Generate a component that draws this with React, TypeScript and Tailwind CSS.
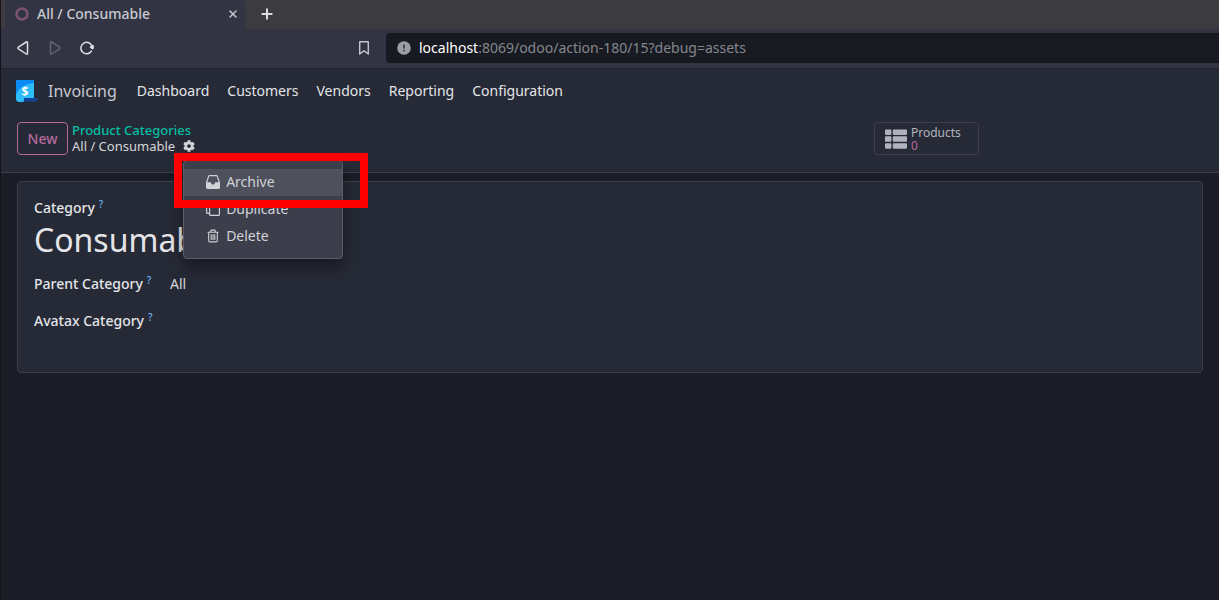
import { useState } from "react";
import { FaCog, FaThList } from "react-icons/fa";
import { Plus, X } from "lucide-react";

const NAV_ITEMS = ["Dashboard", "Customers", "Vendors", "Reporting", "Configuration"];

function OdooRing() {
  return (
    <svg viewBox="0 0 14 14" className="w-3.5 h-3.5 flex-shrink-0" fill="none">
      <circle cx="7" cy="7" r="5.4" stroke="#7b5272" strokeWidth="2.8" />
    </svg>
  );
}

function InvoicingLogo() {
  return (
    <svg viewBox="0 0 22 22" className="w-[22px] h-[22px] flex-shrink-0">
      <path d="M0 0h18v18H8v4H4a4 4 0 0 1-4-4z" fill="#2ebcfa" />
      <path d="M0 0h18v3C9 4 2 8 0 15z" fill="#0d8bf5" />
      <path d="M8 18h14c-.5 2.6-2 3.6-4 3.6H7.2c.6-.8.8-2 .8-3.6z" fill="#144496" />
      <circle cx="4" cy="18" r="4" fill="#2ebcfa" />
      <text
        x="9"
        y="15.5"
        textAnchor="middle"
        fontFamily="Noto Sans, sans-serif"
        fontSize="12"
        fontWeight="700"
        fill="#ffffff"
      >
        $
      </text>
    </svg>
  );
}

function Triangle({ forward = false }: { forward?: boolean }) {
  return (
    <svg viewBox="0 0 14 16" className="w-3.5 h-4" fill="none" strokeWidth="1.5" strokeLinejoin="round">
      {forward ? (
        <path d="M2.5 2.6v10.8c0 .8.6 1 1.2.6l7.9-5.1c.6-.5.6-1.3 0-1.8L3.7 2c-.6-.4-1.2-.2-1.2.6z" stroke="#62646f" />
      ) : (
        <path d="M11.5 2.6v10.8c0 .8-.6 1-1.200.6L2.400 8.900c-.6-.5-.6-1.300 0-1.800L10.300 2c.6-.4 1.200-.2 1.200.6z" stroke="#dfe0e4" />
      )}
    </svg>
  );
}

function ReloadIcon() {
  return (
    <svg viewBox="0 0 14 14" className="w-3.5 h-3.5" fill="none">
      <path d="M11.4 10.1A5.700 5.700 0 1 1 12.100 5.500" stroke="#dfe0e4" strokeWidth="1.500" strokeLinecap="round" />
      <path d="M9.900 6.100l3.300-2 .6 3.300-1.700.6z" fill="#dfe0e4" stroke="#dfe0e4" strokeWidth="0.800" strokeLinejoin="round" />
    </svg>
  );
}

function BookmarkIcon() {
  return (
    <svg viewBox="0 0 10 14" className="w-2.5 h-3.5" fill="none">
      <path d="M.7.7h8.600v12.300L5 9.700.7 13z" stroke="#c6c7cc" strokeWidth="1.400" strokeLinejoin="round" />
    </svg>
  );
}

function SiteInfoIcon() {
  return (
    <svg viewBox="0 0 14 14" className="w-3.5 h-3.5">
      <circle cx="7" cy="7" r="6.800" fill="#9c9ea6" />
      <path d="M6 3.500h2v4H6zM6 8.800h2v1.800H6z" fill="#4a4c56" />
    </svg>
  );
}

function ArchiveIcon() {
  return (
    <svg viewBox="0 0 14 14" className="w-3.5 h-3.5" fill="currentColor">
      <path
        fillRule="evenodd"
        d="M3.400 0h7.200c.6 0 1 .3 1.200.9L14 7.300V12.600c0 .8-.6 1.400-1.400 1.400H1.400C.6 14 0 13.400 0 12.600V7.300L2.200.9C2.400.3 2.800 0 3.400 0zM3.300 1.200L1.300 7.300h3.100c.5 0 .6.3.7.7.2.9.9 1.500 1.900 1.500s1.700-.6 1.900-1.500c.1-.4.2-.7.7-.7h3.100l-2-6.100z"
      />
    </svg>
  );
}

function DuplicateIcon() {
  return (
    <svg viewBox="0 0 14 14" className="w-3.5 h-3.5" fill="none" stroke="currentColor" strokeWidth="1.200">
      <rect x="3.600" y=".6" width="9.800" height="12.800" rx="1" />
      <path d="M3.600 2.900H1.600a1 1 0 0 0-1 1v6.500a1 1 0 0 0 1 1h2" />
    </svg>
  );
}

function DeleteIcon() {
  return (
    <svg viewBox="0 0 14 14" className="w-3.5 h-3.5" fill="none" stroke="currentColor" strokeWidth="1.100">
      <path d="M1.500 3.300h11M4.700 3.300V1.900c0-.5.300-.8.800-.8h3c.5 0 .8.300.8.800v1.400" />
      <path d="M2.700 3.300v8.200c0 .9.500 1.400 1.300 1.400h6c.8 0 1.300-.5 1.300-1.400V3.300M5.200 5.300v5.600M7 5.300v5.600M8.800 5.300v5.600" />
    </svg>
  );
}

const ACTIONS = [
  { label: "Archive", icon: ArchiveIcon },
  { label: "Duplicate", icon: DuplicateIcon },
  { label: "Delete", icon: DeleteIcon },
];

function BrowserChrome() {
  return (
    <header>
      <div className="flex h-[29px] items-stretch bg-[#3c3b3f] pb-px pl-1">
        <div className="-mb-px flex w-60 items-center gap-2 rounded-tr bg-[#323443] pb-0.5 pl-2.5 pr-1.5">
          <OdooRing />
          <span className="flex-1 truncate text-sm font-medium text-[#c9cad0]">All / Consumable</span>
          <button aria-label="Close tab" className="text-[#c9cad0]">
            <X className="w-3 h-3" strokeWidth={3} />
          </button>
        </div>
        <button aria-label="New tab" className="ml-3.5 text-[#dcdcde]">
          <Plus className="w-4 h-4" strokeWidth={3} />
        </button>
      </div>
      <div className="flex h-10 items-center border-b border-[#21242e] bg-[#323443] pb-0.5 pl-[15px]">
        <div className="flex items-center gap-[18px]">
          <button aria-label="Back"><Triangle /></button>
          <button aria-label="Forward" disabled><Triangle forward /></button>
          <button aria-label="Reload"><ReloadIcon /></button>
        </div>
        <div className="flex min-w-0 flex-1 items-center">
          <button aria-label="Bookmark this page" className="ml-[265px] mr-[17px]"><BookmarkIcon /></button>
          <div className="flex h-[30px] flex-1 items-center gap-2 rounded-l bg-[#181a21] pl-[11px]">
            <button aria-label="Site information"><SiteInfoIcon /></button>
            <div
              role="textbox"
              aria-label="Address"
              contentEditable
              suppressContentEditableWarning
              className="flex-1 truncate text-sm text-[#85878d] outline-none"
            >
              <span className="text-white">localhost</span>:8069/odoo/action-180/15?debug=assets
            </div>
          </div>
        </div>
      </div>
    </header>
  );
}

function ActionMenu() {
  return (
    <div
      role="menu"
      className="absolute left-0 top-[22px] z-10 w-40 rounded border border-[#5a5c69] bg-[#3c3e4b] py-2 shadow-[0_8px_16px_rgba(0,0,0,0.4)]"
    >
      {ACTIONS.map(({ label, icon: Icon }, i) => (
        <button
          key={label}
          role="menuitem"
          className={`flex h-[27px] w-full items-center gap-1.5 pb-0.5 pl-[22px] text-sm text-[#d1d2d6] ${i === 0 ? "bg-[#4e505b]" : ""}`}
        >
          <Icon />
          {label}
        </button>
      ))}
      <div className="pointer-events-none absolute -left-2.5 -top-2 h-[55px] w-[194px] border-8 border-[#ff0000]" />
    </div>
  );
}

function ControlPanel() {
  const [menuOpen, setMenuOpen] = useState(true);

  return (
    <div className="flex items-start gap-1 border-b border-[#3c3e4b] bg-[#262a36] px-4 pb-[17px] pt-[9px]">
      <button className="h-[33px] w-[51px] rounded border border-[#b56a9f] text-sm font-medium text-[#b56a9f]">New</button>
      <div className="flex flex-col text-[13px] leading-4 text-[#d5d6da]">
        <a href="#categories" className="font-medium text-[#00bfa5]">Product Categories</a>
        <div className="flex items-center gap-2">
          <span>All / Consumable</span>
          <div className="relative">
            <button aria-label="Actions" aria-expanded={menuOpen} onClick={() => setMenuOpen(!menuOpen)} className="block">
              <FaCog className="w-3 h-4" />
            </button>
            {menuOpen && <ActionMenu />}
          </div>
        </div>
      </div>
      <button className="ml-auto mr-56 flex h-[33px] w-[105px] items-center gap-1 rounded border border-[#3c3e4b] pl-2.5 text-left">
        <FaThList className="w-[22px] h-[22px] text-[#b1b3bc]" />
        <span className="flex flex-col text-xs leading-[13px] text-[#b1b3bc]">
          <span>Products</span>
          <span className="text-[#b56a9f]">0</span>
        </span>
      </button>
    </div>
  );
}

function FieldLabel({ htmlFor, children }: { htmlFor: string; children: string }) {
  return (
    <label htmlFor={htmlFor} className="flex items-start gap-1 text-sm leading-5 font-medium text-[#e4e5e8]">
      {children}
      <sup className="top-0 text-[10px] leading-3 text-[#6cb2f2]">?</sup>
    </label>
  );
}

export default function App() {
  return (
    <div className="min-h-screen border-l border-[#15101a] bg-[#1b1d26] font-['Noto_Sans',sans-serif]">
      <BrowserChrome />

      <nav className="flex h-11 items-center bg-[#262a36] pl-[15px] text-sm text-[#e4e5e8]">
        <InvoicingLogo />
        <a href="#invoicing" className="ml-2.5 mr-5 text-base text-[#c6c8cf]">Invoicing</a>
        <div className="flex gap-[18px]">
          {NAV_ITEMS.map((item) => (
            <button key={item}>{item}</button>
          ))}
        </div>
      </nav>

      <ControlPanel />

      <main className="mx-4 mt-2 rounded border border-[#3c3e4b] bg-[#262a36] px-4 pb-[41px] pt-4">
        <FieldLabel htmlFor="category">Category</FieldLabel>
        <input
          id="category"
          defaultValue="Consumable"
          className="block h-11 w-full bg-transparent text-[32px] leading-[44px] text-[#e4e5e8] outline-none"
        />
        <div className="mt-3 grid grid-cols-[136px_1fr] gap-y-[17px]">
          <FieldLabel htmlFor="parent">Parent Category</FieldLabel>
          <input id="parent" defaultValue="All" className="h-5 bg-transparent text-sm text-[#d5d6da] outline-none" />
          <FieldLabel htmlFor="avatax">Avatax Category</FieldLabel>
          <input id="avatax" className="h-5 bg-transparent text-sm text-[#d5d6da] outline-none" />
        </div>
      </main>
    </div>
  );
}
